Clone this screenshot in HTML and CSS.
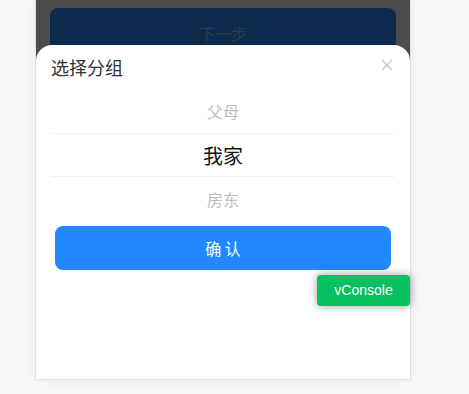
FILE: index.html
```html
<!DOCTYPE html>
<html lang="zh-CN">
<head>
<meta charset="utf-8">
<title>选择分组</title>
<link rel="stylesheet" href="styles.css">
</head>
<body>
<div class="phone">
  <div class="page">
    <button class="next-btn">下一步</button>
  </div>
  <div class="mask"></div>
  <div class="sheet">
    <div class="sheet-head">
      <span class="sheet-title">选择分组</span>
      <span class="close">
        <svg width="12" height="12" viewBox="0 0 12 12"><path d="M1 1L11 11M11 1L1 11" stroke="#c8c9cc" stroke-width="1.4" fill="none"/></svg>
      </span>
    </div>
    <div class="picker">
      <div class="opt">父母</div>
      <div class="opt opt-sel">我家</div>
      <div class="opt">房东</div>
    </div>
    <div class="actions">
      <button class="confirm-btn">确 认</button>
    </div>
  </div>
</div>
<div class="vconsole">vConsole</div>
</body>
</html>
```
FILE: styles.css
```css
html, body {
  margin: 0;
  padding: 0;
}
body {
  background: #f7f7f7;
  font-family: "Noto Sans CJK SC", "Noto Sans", sans-serif;
  width: 469px;
  height: 394px;
  overflow: hidden;
  position: relative;
}
.phone {
  position: relative;
  margin-left: 35px;
  width: 374px;
  height: 379px;
  background: #fff;
  border: 1px solid #e2e2e2;
  border-top: none;
  box-shadow: 0 0 12px rgba(0,0,0,0.05);
  overflow: hidden;
}
.page {
  padding: 8px 14px 8px 14px;
}
.next-btn {
  display: block;
  width: 100%;
  height: 50px;
  border: none;
  border-radius: 8px;
  background: #268cff;
  color: rgba(255,255,255,0.5);
  font-family: inherit;
  font-size: 16px;
  padding: 0;
}
.mask {
  position: absolute;
  inset: 0;
  background: rgba(0,0,0,0.7);
}
.sheet {
  position: absolute;
  left: 0;
  right: 0;
  top: 45px;
  bottom: 0;
  background: #fff;
  border-radius: 16px 16px 0 0;
  display: flex;
  flex-direction: column;
}
.sheet-head {
  height: 44px;
  display: flex;
  align-items: center;
  justify-content: space-between;
  padding: 0 17px 0 15px;
}
.sheet-title {
  font-size: 18px;
  color: #323233;
  line-height: 24px;
}
.close {
  display: flex;
  margin-top: -5px;
}
.picker {
  margin: 0 15px 0 15px;
  display: flex;
  flex-direction: column;
}
.opt {
  height: 44px;
  display: flex;
  align-items: center;
  justify-content: center;
  font-size: 16px;
  color: #bdbdbd;
  box-sizing: border-box;
}
.opt-sel {
  font-size: 20px;
  color: #111;
  border-top: 1px solid #f2f2f2;
  border-bottom: 1px solid #f2f2f2;
}
.actions {
  padding: 5px 19px 0;
}
.confirm-btn {
  display: block;
  width: 100%;
  height: 44px;
  border: none;
  border-radius: 8px;
  background: #2188ff;
  color: #fff;
  font-family: inherit;
  font-size: 16px;
  padding: 0;
}
.vconsole {
  position: absolute;
  left: 317px;
  top: 275px;
  width: 93px;
  height: 31px;
  line-height: 31px;
  text-align: center;
  background: #07c160;
  color: #fff;
  font-family: "Liberation Sans", Arial, sans-serif;
  font-size: 14px;
  border-radius: 4px;
  box-shadow: 0 0 8px rgba(0,0,0,0.4);
}
```
